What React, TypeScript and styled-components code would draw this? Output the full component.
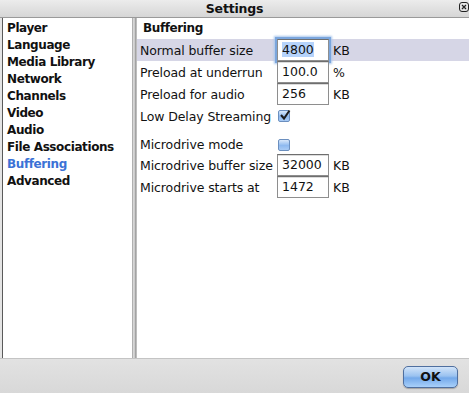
import React from 'react';
import styled, { createGlobalStyle } from 'styled-components';

const GlobalStyle = createGlobalStyle`
  html, body { margin: 0; padding: 0; background: #e6e6e6; }
  body { font-family: "DejaVu Sans", "Liberation Sans", sans-serif; }
`;

const Window = styled.div`
  width: 469px;
  height: 393px;
  display: flex;
  flex-direction: column;
  background: #e4e4e4;
  overflow: hidden;
`;

const TitleBar = styled.div`
  height: 17px;
  flex: none;
  display: flex;
  align-items: center;
  justify-content: center;
  position: relative;
  background: linear-gradient(#ececec, #d6d6d6);
  border-bottom: 1px solid #9a9a9a;
  font-size: 12.5px;
  font-weight: bold;
  letter-spacing: -0.2px;
  color: #111;
`;

const CloseIcon = styled.svg`
  position: absolute;
  right: 0;
  top: 2px;
`;

const Body = styled.div`
  flex: 1;
  display: flex;
  padding-left: 2px;
  min-height: 0;
`;

const Sidebar = styled.div`
  width: 125px;
  background: #fff;
  border-left: 1px solid #5a5a5a;
  padding: 2px 0 0 4px;
`;

const NavItem = styled.div<{ $active?: boolean }>`
  height: 17px;
  line-height: 17px;
  font-size: 12px;
  font-weight: bold;
  letter-spacing: -0.4px;
  color: ${p => (p.$active ? '#3b72d6' : '#111')};
  white-space: nowrap;
`;

const Splitter = styled.div`
  width: 4px;
  background: linear-gradient(90deg, #9c9c9c, #dadada 40%, #c6c6c6 70%, #8a8a8a);
`;

const Content = styled.div`
  flex: 1;
  background: #fff;
  border-left: 1px solid #bdbdbd;
`;

const SectionTitle = styled.div`
  height: 21px;
  line-height: 21px;
  padding-left: 6px;
  font-size: 12px;
  font-weight: bold;
  letter-spacing: -0.4px;
  color: #111;
`;

const Row = styled.div<{ $selected?: boolean; $h?: number }>`
  display: grid;
  grid-template-columns: 137px 52px auto;
  align-items: center;
  height: ${p => p.$h ?? 22}px;
  padding-left: 3px;
  background: ${p => (p.$selected ? '#d6d6e6' : 'transparent')};
`;

const Label = styled.span`
  font-size: 12.5px;
  letter-spacing: -0.1px;
  color: #111;
  white-space: nowrap;
`;

const Field = styled.div<{ $focus?: boolean }>`
  box-sizing: border-box;
  height: 22px;
  width: 52px;
  border: 1px solid #8e8e8e;
  border-top-color: #6e6e6e;
  box-shadow: ${p => (p.$focus ? '0 0 0 2px #7ba6dd, 0 0 2px 3px #a9c6ec' : 'inset 0 1px 0 #dcdcdc')};
  background: #fff;
  padding: 2px 0 0 4px;
  font-size: 12.5px;
  line-height: 16px;
  color: #111;
`;

const Selected = styled.span`
  background: #b5d3fb;
`;

const Unit = styled.span`
  padding-left: 4px;
  font-size: 12.5px;
  color: #111;
`;

const Check = styled.div`
  width: 10px;
  height: 10px;
  margin-left: 1px;
  border-radius: 2px;
  border: 1px solid #6b8fbf;
  background: linear-gradient(#d9e8fa, #8fbaf0 55%, #a9cbf5);
  position: relative;
`;

const Tick = styled.svg`
  position: absolute;
  left: 0;
  top: -2px;
`;

const Gap = styled.div`
  height: 8px;
`;

const Footer = styled.div`
  height: 34px;
  flex: none;
  display: flex;
  align-items: center;
  justify-content: flex-end;
  padding-right: 11px;
  background: linear-gradient(#e2e2e2, #d8d8d8);
  border-top: 1px solid #c4c4c4;
`;

const OkButton = styled.button`
  width: 55px;
  height: 22px;
  margin-top: 1px;
  border-radius: 5px;
  border: 1px solid #4f6f9f;
  background: linear-gradient(#d2e4f9, #9ac2f0 45%, #74a9ea 55%, #a8d0fa);
  box-shadow: 0 1px 1px rgba(0, 0, 0, 0.25);
  font-family: "DejaVu Sans", sans-serif;
  font-size: 12.5px;
  font-weight: bold;
  color: #111;
  padding: 0;
`;

const nav = ['Player', 'Language', 'Media Library', 'Network', 'Channels', 'Video', 'Audio', 'File Associations', 'Buffering', 'Advanced'];

export default function App() {
  return (
    <Window>
      <GlobalStyle />
      <TitleBar>
        Settings
        <CloseIcon width="10" height="10" viewBox="0 0 10 10">
          <rect x="0.5" y="0.5" width="9" height="9" rx="2.5" fill="none" stroke="#222" />
          <path d="M3 3 L7 7 M7 3 L3 7" stroke="#222" strokeWidth="1.2" />
        </CloseIcon>
      </TitleBar>
      <Body>
        <Sidebar>
          {nav.map(n => (
            <NavItem key={n} $active={n === 'Buffering'}>{n}</NavItem>
          ))}
        </Sidebar>
        <Splitter />
        <Content>
          <SectionTitle>Buffering</SectionTitle>
          <Row $selected>
            <Label>Normal buffer size</Label>
            <Field $focus><Selected>4800</Selected></Field>
            <Unit>KB</Unit>
          </Row>
          <Row>
            <Label>Preload at underrun</Label>
            <Field>100.0</Field>
            <Unit>%</Unit>
          </Row>
          <Row>
            <Label>Preload for audio</Label>
            <Field>256</Field>
            <Unit>KB</Unit>
          </Row>
          <Row>
            <Label>Low Delay Streaming</Label>
            <Check>
              <Tick width="12" height="12" viewBox="0 0 12 12">
                <path d="M2 6 L5 9.5 L10.5 1.5" fill="none" stroke="#1c1c1c" strokeWidth="2" />
              </Tick>
            </Check>
          </Row>
          <Gap />
          <Row $h={19}>
            <Label>Microdrive mode</Label>
            <Check />
          </Row>
          <Row>
            <Label>Microdrive buffer size</Label>
            <Field>32000</Field>
            <Unit>KB</Unit>
          </Row>
          <Row>
            <Label>Microdrive starts at</Label>
            <Field>1472</Field>
            <Unit>KB</Unit>
          </Row>
        </Content>
      </Body>
      <Footer>
        <OkButton>OK</OkButton>
      </Footer>
    </Window>
  );
}
